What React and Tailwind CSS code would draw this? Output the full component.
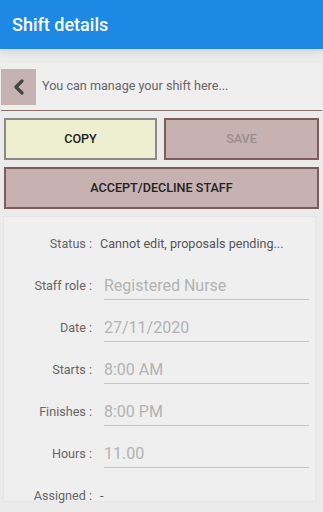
import React from "react";

function Field({ label, value }) {
  return (
    <div className="flex h-[42px] items-center">
      <div className="w-[88px] text-right text-[12.6px] text-[#666666]">{label}</div>
      <div className="ml-[12px] mr-[6px] flex h-[27px] flex-1 items-center border-b border-[#c4c4c4] text-[16px] text-[#b3b3b3]">
        {value}
      </div>
    </div>
  );
}

export default function App() {
  return (
    <div
      className="relative h-[512px] w-[323px] overflow-hidden bg-[#ebebeb]"
      style={{ fontFamily: "Roboto, 'Noto Sans', sans-serif" }}
    >
      <div className="relative z-10 flex h-[49px] items-center bg-[#1e88e5] px-[12px] text-[18px] font-medium text-white shadow-[0_2px_8px_rgba(0,0,0,0.12)]">
        Shift details
      </div>

      <div className="mx-[1px] mt-[14px] flex h-[48px] items-center border-b border-[#8c7070] bg-[#efefef]">
        <div className="flex h-[36px] w-[35px] items-center justify-center bg-[#c6b2b2]">
          <svg width="12" height="16" viewBox="0 0 12 16">
            <polyline points="9,2 3,8 9,14" fill="none" stroke="#454545" strokeWidth="3.2" strokeLinecap="round" strokeLinejoin="round" />
          </svg>
        </div>
        <div className="ml-[6px] text-[12.6px] text-[#666666]">You can manage your shift here...</div>
      </div>

      <div className="mx-[4px] mt-[7px] flex gap-[7px]">
        <div className="flex h-[42px] w-[153px] items-center justify-center border-2 border-[#8a8a8a] bg-[#eeeed0] text-[12.6px] font-medium text-[#222222]">
          COPY
        </div>
        <div className="flex h-[42px] flex-1 items-center justify-center border-2 border-[#7d5c5c] bg-[#c7b1b1] text-[12.6px] font-medium text-[#9a8c8c]">
          SAVE
        </div>
      </div>

      <div className="mx-[4px] mt-[7px] flex h-[42px] items-center justify-center border-2 border-[#7d5c5c] bg-[#c7b1b1] text-[12.6px] font-medium text-[#222222]">
        ACCEPT/DECLINE STAFF
      </div>

      <div className="ml-[3px] mr-[7px] mt-[7px] h-[286px] border border-[#e6e6e6] bg-[#efefef] pt-[6px]">
        <div className="flex h-[42px] items-center">
          <div className="w-[88px] text-right text-[12.6px] text-[#666666]">Status :</div>
          <div className="ml-[8px] text-[12.6px] text-[#555555]">Cannot edit, proposals pending...</div>
        </div>
        <Field label="Staff role :" value="Registered Nurse" />
        <Field label="Date :" value="27/11/2020" />
        <Field label="Starts :" value="8:00 AM" />
        <Field label="Finishes :" value="8:00 PM" />
        <Field label="Hours :" value="11.00" />
        <div className="flex h-[42px] items-center">
          <div className="w-[88px] text-right text-[12.6px] text-[#666666]">Assigned :</div>
          <div className="ml-[8px] text-[12.6px] text-[#555555]">-</div>
        </div>
      </div>
    </div>
  );
}
